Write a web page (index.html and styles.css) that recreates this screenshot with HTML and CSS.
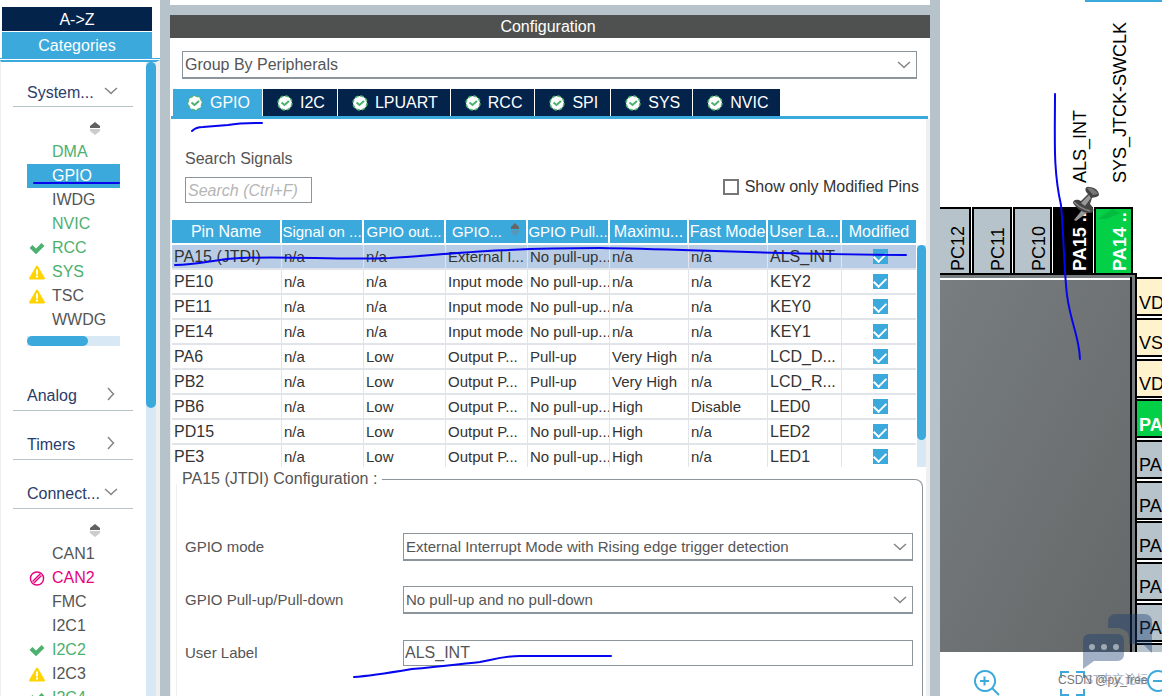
FILE: index.html
```html
<!DOCTYPE html>
<html lang="en">
<head>
    <meta charset="UTF-8">
    <meta name="viewport" content="width=device-width, initial-scale=1.0">
    <title>Pinout &amp; Configuration</title>
    <link rel="stylesheet" href="styles.css">
</head>
<body>
    <svg class="defs" aria-hidden="true">
        <symbol id="down" viewBox="0 0 14 8"><path d="M1 1 L5 4.5 L7 6.5 L9 4.5 L13 1" fill="none" stroke="#858585" stroke-width="1.5"/></symbol>
        <symbol id="right" viewBox="0 0 8 14"><path d="M1 1 L4.500 5 L6.500 7 L4.500 9 L1 13" fill="none" stroke="#858585" stroke-width="1.5"/></symbol>
        <symbol id="sort" viewBox="0 0 10 14"><path d="M5 0 L10 4 V6 H0 V4 Z" fill="#606060"/><path d="M5 13 L10 9 V7 H0 V9 Z" fill="#cccccc"/></symbol>
        <symbol id="sort-blue" viewBox="0 0 10 14"><path d="M5 0 L9 4 V6 H1 V4 Z" fill="#666"/><path d="M5 13 L9 9 V7 H1 V9 Z" fill="#5796b8"/></symbol>
        <symbol id="tick" viewBox="0 0 16 12"><path d="M2 4 L7 9 L14 2" fill="none" stroke="#4cb06e" stroke-width="4"/></symbol>
        <symbol id="warn" viewBox="0 0 16 14"><path d="M8 1 L15 13 H1 Z" fill="#ffd400" stroke="#ffd400" stroke-width="2" stroke-linejoin="round"/><path d="M8 4 V9 M8 10 V12" stroke="#fff" stroke-width="2"/></symbol>
        <symbol id="ban" viewBox="0 0 16 16"><circle cx="8" cy="8" r="7" fill="none" stroke="#e6007e" stroke-width="1.500"/><path d="M4 12 L12 4" stroke="#e6007e" stroke-width="3.500"/><path d="M4 12 L12 4" stroke="#fff" stroke-width="1"/></symbol>
        <symbol id="ok" viewBox="0 0 16 16"><circle cx="8" cy="8" r="7" fill="#fff" stroke="#55b575" stroke-width="1.500" stroke-dasharray="3.500 2"/><path d="M4.500 7.500 L7.500 10 L12 6" fill="none" stroke="#4cb06e" stroke-width="2"/></symbol>
    </svg>

    <div class="app">
        <aside class="sidebar">
            <div class="modes">
                <button class="mode">A-&gt;Z</button>
                <button class="mode active">Categories</button>
            </div>
            <div class="tree">
                <div class="groups">
                    <button class="group">System... <svg class="chev"><use href="#down"/></svg></button>
                    <svg class="sort"><use href="#sort"/></svg>
                    <ul>
                        <li class="green"><i></i>DMA</li>
                        <li class="selected"><i></i>GPIO</li>
                        <li><i></i>IWDG</li>
                        <li class="green"><i></i>NVIC</li>
                        <li class="green"><i><svg><use href="#tick"/></svg></i>RCC</li>
                        <li class="green"><i><svg><use href="#warn"/></svg></i>SYS</li>
                        <li><i><svg><use href="#warn"/></svg></i>TSC</li>
                        <li><i></i>WWDG</li>
                    </ul>
                    <div class="hscroll"><div class="hthumb"></div></div>
                    <button class="group closed">Analog <svg class="chev"><use href="#right"/></svg></button>
                    <button class="group closed">Timers <svg class="chev"><use href="#right"/></svg></button>
                    <button class="group closed">Connect... <svg class="chev"><use href="#down"/></svg></button>
                    <svg class="sort"><use href="#sort"/></svg>
                    <ul>
                        <li><i></i>CAN1</li>
                        <li class="pink"><i><svg><use href="#ban"/></svg></i>CAN2</li>
                        <li><i></i>FMC</li>
                        <li><i></i>I2C1</li>
                        <li class="green"><i><svg><use href="#tick"/></svg></i>I2C2</li>
                        <li><i><svg><use href="#warn"/></svg></i>I2C3</li>
                        <li class="green"><i><svg><use href="#tick"/></svg></i>I2C4</li>
                    </ul>
                </div>
                <div class="vscroll"><div class="vthumb tall"></div></div>
            </div>
        </aside>

        <main class="config">
            <h1>Configuration</h1>
            <div class="group-by">
                <div class="select">
                    <select aria-label="Group by"><option>Group By Peripherals</option></select>
                    <svg><use href="#down"/></svg>
                </div>
            </div>
            <nav class="tabs">
                <button class="tab active"><svg><use href="#ok"/></svg>GPIO</button>
                <button class="tab"><svg><use href="#ok"/></svg>I2C</button>
                <button class="tab"><svg><use href="#ok"/></svg>LPUART</button>
                <button class="tab"><svg><use href="#ok"/></svg>RCC</button>
                <button class="tab"><svg><use href="#ok"/></svg>SPI</button>
                <button class="tab"><svg><use href="#ok"/></svg>SYS</button>
                <button class="tab"><svg><use href="#ok"/></svg>NVIC</button>
            </nav>

            <div class="panel">
                <div class="filters">
                    <div class="search">
                        <label for="search">Search Signals</label>
                        <input type="text" id="search" placeholder="Search (Ctrl+F)">
                    </div>
                    <label class="only"><input type="checkbox"> Show only Modified Pins</label>
                </div>

                <div class="pins">
                    <table>
                        <colgroup>
                            <col class="c110"><col class="c82"><col class="c82"><col class="c82"><col class="c82"><col class="c79"><col class="c79"><col class="c73"><col class="c73">
                        </colgroup>
                        <thead>
                            <tr><th>Pin Name</th><th class="tight">Signal on ...</th><th class="tight">GPIO out...</th><th class="tight">GPIO... <svg class="thsort"><use href="#sort-blue"/></svg></th><th class="tight">GPIO Pull...</th><th>Maximu...</th><th>Fast Mode</th><th>User La...</th><th>Modified</th></tr>
                        </thead>
                        <tbody>
                            <tr class="selected"><td>PA15 (JTDI)</td><td>n/a</td><td>n/a</td><td>External I...</td><td>No pull-up...</td><td>n/a</td><td>n/a</td><td>ALS_INT</td><td><input type="checkbox" aria-label="PA15 modified" checked></td></tr>
                            <tr><td>PE10</td><td>n/a</td><td>n/a</td><td>Input mode</td><td>No pull-up...</td><td>n/a</td><td>n/a</td><td>KEY2</td><td><input type="checkbox" aria-label="PE10 modified" checked></td></tr>
                            <tr><td>PE11</td><td>n/a</td><td>n/a</td><td>Input mode</td><td>No pull-up...</td><td>n/a</td><td>n/a</td><td>KEY0</td><td><input type="checkbox" aria-label="PE11 modified" checked></td></tr>
                            <tr><td>PE14</td><td>n/a</td><td>n/a</td><td>Input mode</td><td>No pull-up...</td><td>n/a</td><td>n/a</td><td>KEY1</td><td><input type="checkbox" aria-label="PE14 modified" checked></td></tr>
                            <tr><td>PA6</td><td>n/a</td><td>Low</td><td>Output P...</td><td>Pull-up</td><td>Very High</td><td>n/a</td><td>LCD_D...</td><td><input type="checkbox" aria-label="PA6 modified" checked></td></tr>
                            <tr><td>PB2</td><td>n/a</td><td>Low</td><td>Output P...</td><td>Pull-up</td><td>Very High</td><td>n/a</td><td>LCD_R...</td><td><input type="checkbox" aria-label="PB2 modified" checked></td></tr>
                            <tr><td>PB6</td><td>n/a</td><td>Low</td><td>Output P...</td><td>No pull-up...</td><td>High</td><td>Disable</td><td>LED0</td><td><input type="checkbox" aria-label="PB6 modified" checked></td></tr>
                            <tr><td>PD15</td><td>n/a</td><td>Low</td><td>Output P...</td><td>No pull-up...</td><td>High</td><td>n/a</td><td>LED2</td><td><input type="checkbox" aria-label="PD15 modified" checked></td></tr>
                            <tr><td>PE3</td><td>n/a</td><td>Low</td><td>Output P...</td><td>No pull-up...</td><td>High</td><td>n/a</td><td>LED1</td><td><input type="checkbox" aria-label="PE3 modified" checked></td></tr>
                        </tbody>
                    </table>
                    <div class="vscroll"><div class="vthumb"></div></div>
                </div>

                <fieldset>
                    <legend>PA15 (JTDI) Configuration :</legend>
                    <div class="field">
                        <label for="mode">GPIO mode</label>
                        <div class="select">
                            <select id="mode"><option>External Interrupt Mode with Rising edge trigger detection</option></select>
                            <svg><use href="#down"/></svg>
                        </div>
                    </div>
                    <div class="field">
                        <label for="pull">GPIO Pull-up/Pull-down</label>
                        <div class="select">
                            <select id="pull"><option>No pull-up and no pull-down</option></select>
                            <svg><use href="#down"/></svg>
                        </div>
                    </div>
                    <div class="field">
                        <label for="label">User Label</label>
                        <input type="text" id="label" value="ALS_INT">
                    </div>
                </fieldset>
            </div>
        </main>

        <section class="pinout">
            <svg class="chip" viewBox="0 0 222 652" preserveAspectRatio="xMinYMin slice">
                <defs>
                    <linearGradient id="body" x1="0" y1="0" x2="1" y2="1">
                        <stop offset="0" stop-color="#787d80"/>
                        <stop offset="1" stop-color="#646868"/>
                    </linearGradient>
                </defs>
                <rect x="145" y="0" width="77" height="2" fill="#3ba9dc"/>
                <!-- top pins -->
                <g stroke="#000" stroke-width="2">
                    <rect x="-8" y="208" width="38" height="66" fill="#b7c3cb"/>
                    <rect x="33" y="208" width="38" height="66" fill="#b7c3cb"/>
                    <rect x="74" y="208" width="37" height="66" fill="#b7c3cb"/>
                    <rect x="114" y="208" width="38" height="66" fill="#000"/>
                    <rect x="155" y="208" width="37" height="66" fill="#03d047"/>
                </g>
                <g class="pin">
                    <text transform="translate(24 271) rotate(-90)">PC12</text>
                    <text transform="translate(64 271) rotate(-90)">PC11</text>
                    <text transform="translate(105 271) rotate(-90)">PC10</text>
                    <text transform="translate(146 271) rotate(-90)" class="used">PA15 ..</text>
                    <text transform="translate(186 271) rotate(-90)" class="used">PA14 ..</text>
                    <text transform="translate(146 183) rotate(-90)">ALS_INT</text>
                    <text transform="translate(186 183) rotate(-90)">SYS_JTCK-SWCLK</text>
                </g>
                <!-- package -->
                <rect x="0" y="273" width="197" height="379" fill="#000"/>
                <rect x="0" y="275" width="195" height="377" fill="#777c7f"/>
                <rect x="0" y="278" width="190" height="374" fill="url(#body)"/>
                <rect x="0" y="278" width="190" height="2" fill="#fff"/>
                <rect x="190" y="277" width="2" height="375" fill="#000"/>
                <!-- right pins -->
                <g stroke="#000" stroke-width="2">
                    <rect x="196" y="278" width="40" height="37" fill="#fff3cd"/>
                    <rect x="196" y="319" width="40" height="37" fill="#fff3cd"/>
                    <rect x="196" y="360" width="40" height="37" fill="#fff3cd"/>
                    <rect x="196" y="400" width="40" height="37" fill="#03d047"/>
                    <rect x="196" y="441" width="40" height="37" fill="#b7c3cb"/>
                    <rect x="196" y="482" width="40" height="37" fill="#b7c3cb"/>
                    <rect x="196" y="522" width="40" height="37" fill="#b7c3cb"/>
                    <rect x="196" y="563" width="40" height="37" fill="#b7c3cb"/>
                    <rect x="196" y="604" width="40" height="37" fill="#b7c3cb"/>
                    <rect x="196" y="644" width="40" height="37" fill="#b7c3cb"/>
                </g>
                <g class="pin">
                    <text x="199" y="309">VD</text>
                    <text x="199" y="349">VS</text>
                    <text x="199" y="390">VD</text>
                    <text x="199" y="431" class="used">PA</text>
                    <text x="199" y="471">PA</text>
                    <text x="199" y="512">PA</text>
                    <text x="199" y="552">PA</text>
                    <text x="199" y="593">PA</text>
                    <text x="199" y="634">PA</text>
                </g>
                <!-- pushpin -->
                <path d="M158 219 L172 209 L181 213 L166 219 Z" fill="#024d1d" opacity="0.15"/>
                <path d="M142 210 L148 212 L136 221 L134 220 Z" fill="#999"/>
                <path d="M133 203 C133 199 138 199 141 201 L148 194 C144 191 145 186 149 187 C155 187 159 191 159 195 C157 198 153 197 152 198 L150 204 C155 209 154 213 150 213 C142 213 136 208 133 203 Z" fill="#444"/>
                <path d="M147 188 C151 187 157 191 158 194 L153 195 Z" fill="#777"/>
                <path d="M141 203 L149 195 L151 198 L145 206 Z" fill="#999"/>
                <path d="M134 202 Q141 209 150 211" fill="none" stroke="#888" stroke-width="1.500"/>
            </svg>
            <div class="tools">
                <button aria-label="Zoom in"><svg viewBox="0 0 27 27"><path d="M12 1 a10 10 0 1 0 .1 0 M19 18 L26 25 M7 11 H16 M11.500 6.500 V15.500"/></svg></button>
                <button aria-label="Fit"><svg viewBox="0 0 27 27"><path d="M1 8 V2 H9 M16 2 H24 V8 M1 19 V25 H9 M16 25 H24 V19"/></svg></button>
                <button aria-label="Zoom out"><svg viewBox="0 0 27 27"><path d="M11 1 a10 10 0 1 0 .1 0 M18 18 L25 25 M6 11 H15"/></svg></button>
            </div>
            <div class="watermark">
                <svg viewBox="0 0 80 56">
                    <path d="M35 1 H63 Q71 1 71 9 V40 L62 31 H48 V25 Q48 17 38 15 H27 V9 Q27 1 35 1 Z"/>
                    <path d="M9 21 H36 Q43 21 43 28 V41 Q43 48 36 48 H13 L2 56 V28 Q2 21 9 21 Z"/>
                    <g class="dots"><circle cx="11" cy="34" r="3"/><circle cx="23" cy="34" r="3"/><circle cx="35" cy="34" r="3"/></g>
                </svg>
                <span class="forum">ST中文论坛</span>
                <span class="author">CSDN @py_free</span>
            </div>
        </section>
    </div>

    <!-- hand drawn marks -->
    <svg class="ink" viewBox="0 0 1162 696">
        <path d="M34 183 H119"/>
        <path d="M192 131 Q196 127 203 127 L228 125 Q240 123 262 123"/>
        <path d="M175 265 C200 265 215 259 240 258 C290 256 340 260 390 258 C450 254 500 248 600 248 C680 249 760 254 906 255"/>
        <path d="M1055 94 C1055 140 1053 170 1061 205 C1064 240 1064 270 1067 295 C1071 325 1079 335 1080 359"/>
        <path d="M354 677 C370 676 400 671 412 669 C440 667 460 664 480 662 C495 659 505 656 520 656 H611"/>
    </svg>
</body>
</html>
```

FILE: styles.css
```css
* { box-sizing: border-box; }
body { margin: 0; font-family: "Liberation Sans", Arial, "Noto Sans CJK SC", sans-serif; font-size: 16px; line-height: 20px; color: #555; background: #fff; overflow: hidden; }
button, input, select { font: inherit; color: inherit; margin: 0; }
button { border: none; background: none; padding: 0; cursor: pointer; }
ul { list-style: none; margin: 0; padding: 0; }
svg { display: block; }
.defs { position: absolute; width: 0; height: 0; }

.app { display: flex; height: 100vh; }

/* sidebar */
.sidebar { width: 160px; flex: none; display: flex; flex-direction: column; }
.modes { padding: 7px 8px 0 2px; display: flex; flex-direction: column; gap: 1px; border-bottom: 1px solid #3ba9dc; }
.mode { height: 24px; padding-top: 2px; background: #03234b; color: #fff; }
.mode.active { height: 26px; background: #3ba9dc; }
.tree { flex: 1; min-height: 0; display: flex; justify-content: space-between; margin-top: 1px; border-top: 2px solid #3ba9dc; border-left: 1px solid #eee; border-right: 4px solid #f0f0f0; overflow: hidden; }
.groups { width: 132px; padding-left: 12px; padding-top: 16px; }
.group { width: 100%; height: 29px; display: flex; justify-content: space-between; padding: 5px 15px 0 14px; border-bottom: 1px solid #b7c3cb; color: #2b3c6b; text-align: left; }
.group.closed { height: 26px; margin-bottom: 23px; padding-top: 1px; }
.group.closed:last-of-type { margin-bottom: 0; }
.chev { width: 14px; height: 14px; margin-top: 1px; }
.sort { width: 10px; height: 14px; margin: 15px 0 4px 77px; }
.groups li { height: 24px; line-height: 24px; display: flex; align-items: center; margin-left: 14px; margin-right: 13px; }
.groups li i { width: 25px; flex: none; }
.groups li svg { width: 16px; height: 15px; margin-left: 2px; }
.green { color: #4cb06e; }
.pink { color: #e6007e; }
.groups li.selected { background: #3ba9dc; color: #fff; }
.hscroll { height: 10px; margin: 4px 13px 39px 14px; background: #d9e8f5; }
.hthumb { width: 66%; height: 10px; border-radius: 5px; background: #3ba9dc; }
.vscroll { width: 10px; background: #d9e8f5; }
.vthumb { height: 195px; border-radius: 5px; background: #3ba9dc; }
.vthumb.tall { height: 346px; }

/* configuration */
.config { flex: 1; min-width: 0; display: flex; flex-direction: column; border-left: 10px solid #b7c3cb; border-right: 10px solid #b7c3cb; }
h1 { margin: 5px 0 0; padding-right: 4px; height: 33px; border-top: 10px solid #b7c3cb; background: #4f5150; background-clip: padding-box; color: #fff; font-size: 16px; font-weight: normal; line-height: 23px; text-align: center; }
.group-by { padding: 13px 13px 10px 12px; }
.select { display: grid; align-items: center; }
.select select, .select svg { grid-area: 1 / 1; }
.select select { width: 100%; height: 28px; appearance: none; background: #fff; border: 1px solid #8d959c; border-bottom-width: 2px; border-radius: 0; padding: 1px 2px 0; }
.select svg { width: 14px; height: 8px; justify-self: end; margin-right: 6px; pointer-events: none; }
.tabs { display: flex; gap: 1px; margin: 0 2px 0 1px; padding-left: 2px; border-bottom: 3px solid #3ba9dc; }
.tab { height: 27px; display: flex; align-items: center; gap: 7px; padding: 1px 12px 0 14px; background: #03234b; color: #fff; }
.tab.active { background: #3ba9dc; }
.tab svg { width: 16px; height: 16px; }
.panel { flex: 1; min-height: 0; padding-left: 1px; border-left: 1px solid #f0f0f0; border-right: 4px solid #f0f0f0; overflow: hidden; }
.filters { display: flex; justify-content: space-between; align-items: flex-end; padding: 30px 7px 17px 13px; }
.search { display: flex; flex-direction: column; gap: 8px; }
.search input { width: 127px; height: 26px; border: 1px solid #8d959c; padding: 1px 2px 0; font-style: italic; }
.search input::placeholder { color: #b5b5b5; }
.only { display: flex; align-items: center; gap: 6px; color: #333; height: 33px; }
.only input { appearance: none; width: 16px; height: 16px; border: 2px solid #777; }

.pins { display: flex; height: 247px; overflow: hidden; }
.pins .vscroll { margin: 25px 0 0 1px; }
table { flex: 1; min-width: 0; width: 100%; table-layout: fixed; border-spacing: 0; font-size: 15px; color: #333; }
.c110 { width: 110px; }
.c82 { width: 82px; }
.c79 { width: 79px; }
.c73 { width: 74px; }
th, td { height: 25px; padding: 0; white-space: nowrap; overflow: hidden; }
th { background: #3ba9dc; background-clip: padding-box; border-right: 2px solid #fff; border-bottom: 2px solid #fff; color: #fff; font-size: 16px; font-weight: normal; }
th.tight { font-size: 15px; }
.thsort { display: inline-block; width: 10px; height: 14px; margin-left: 4px; }
td { padding-left: 2px; border-right: 1px solid #e1e4e8; border-bottom: 2px solid #e1e4e8; }
td:first-child, td:nth-child(8) { font-size: 16px; }
td:last-child, th:last-child { border-right: none; text-align: center; }
tr.selected td { background: #b8cde5; }
td input { appearance: none; display: block; width: 15px; height: 15px; margin: 0 auto; background: #3ba9dc; }
td input::before { content: ""; display: block; width: 10px; height: 6px; margin: 0 auto; border-left: 2px solid #fff; border-bottom: 2px solid #fff; transform: translateY(3px) rotate(-45deg); }

fieldset { height: 300px; margin: 2px 3px 0 4px; padding: 44px 9px 0 8px; border: 1px solid #8d959c; border-left-color: #eee; border-radius: 8px; }
legend { padding: 0 5px; margin-left: -8px; }
.field { display: grid; grid-template-columns: 218px 1fr; align-items: center; height: 28px; margin-bottom: 25px; font-size: 15px; }
.field input { height: 26px; border: 1px solid #8d959c; padding: 0 1px; font-size: 16px; }

/* pinout */
.pinout { position: relative; width: 222px; flex: none; display: flex; flex-direction: column; overflow: hidden; }
.chip { flex: 1; min-height: 0; width: 100%; }
.pin { font-size: 18px; fill: #000; }
.pin .used { fill: #fff; font-weight: bold; }
.tools { height: 44px; flex: none; display: flex; gap: 60px; padding: 18px 0 0 33px; }
.tools button { flex: none; width: 27px; height: 27px; }
.tools svg { width: 27px; height: 27px; fill: none; stroke: #3ba9dc; stroke-width: 2; }
.watermark { position: absolute; right: 0; bottom: 8px; width: 104px; height: 75px; font-size: 12px; line-height: 16px; white-space: nowrap; }
.watermark svg { width: 80px; height: 56px; margin-left: 23px; fill: #173a6d; fill-opacity: 0.4; }
.watermark .dots { fill: #c6ccd2; fill-opacity: 0.7; }
.watermark span { position: absolute; bottom: 0; left: 0; color: #777; }
.watermark .forum { left: 27px; color: #a9b4c9; }

.ink { position: absolute; left: 0; top: 0; width: 1162px; height: 696px; pointer-events: none; fill: none; stroke: #0606ee; stroke-width: 2; stroke-linecap: round; }
```
